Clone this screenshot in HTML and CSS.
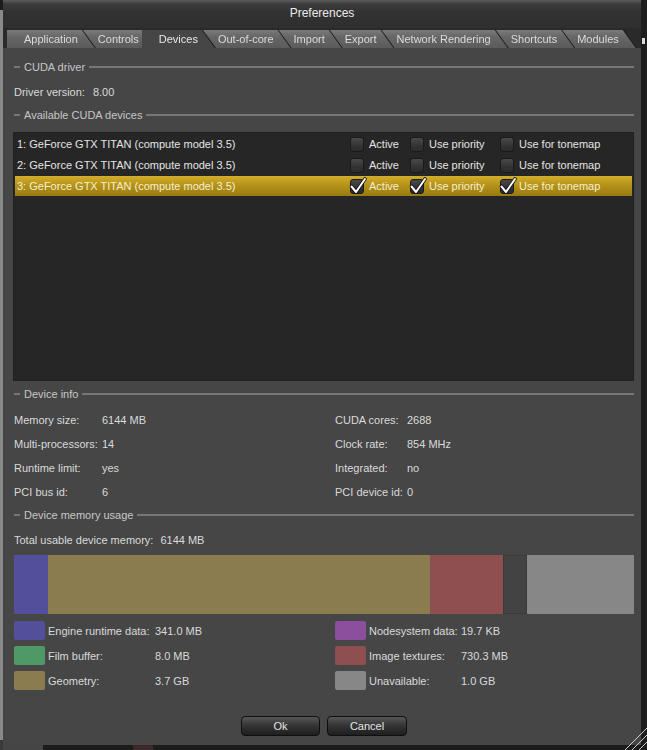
FILE: index.html
```html
<!DOCTYPE html>
<html>
<head>
<meta charset="utf-8">
<title>Preferences</title>
<link rel="stylesheet" href="styles.css">
</head>
<body>
<div class="screen">
  <div class="desk-left"></div>
  <div class="dialog">
    <div class="titlebar">Preferences</div>
    <div class="tabs">
      <div class="tab-wrap"><div class="tab">Application</div></div>
      <div class="tab-wrap"><div class="tab">Controls</div></div>
      <div class="tab-wrap active-wrap"><div class="tab active">Devices</div></div>
      <div class="tab-wrap"><div class="tab">Out-of-core</div></div>
      <div class="tab-wrap"><div class="tab">Import</div></div>
      <div class="tab-wrap"><div class="tab">Export</div></div>
      <div class="tab-wrap"><div class="tab">Network Rendering</div></div>
      <div class="tab-wrap"><div class="tab">Shortcuts</div></div>
      <div class="tab-wrap"><div class="tab">Modules</div></div>
    </div>
    <div class="content">
      <div class="section s1"><span class="sec-dash"></span><span class="sec-title">CUDA driver</span><span class="sec-line"></span></div>
      <div class="plain driver"><span>Driver version:</span><span class="driver-val">8.00</span></div>
      <div class="section s2"><span class="sec-dash"></span><span class="sec-title">Available CUDA devices</span><span class="sec-line"></span></div>
      <div class="devlist">
        <div class="devrow">
          <span class="devname">1: GeForce GTX TITAN (compute model 3.5)</span>
          <span class="opt"><span class="cb"></span>Active</span>
          <span class="opt"><span class="cb"></span>Use priority</span>
          <span class="opt"><span class="cb"></span>Use for tonemap</span>
        </div>
        <div class="devrow">
          <span class="devname">2: GeForce GTX TITAN (compute model 3.5)</span>
          <span class="opt"><span class="cb"></span>Active</span>
          <span class="opt"><span class="cb"></span>Use priority</span>
          <span class="opt"><span class="cb"></span>Use for tonemap</span>
        </div>
        <div class="devrow selected">
          <span class="devname">3: GeForce GTX TITAN (compute model 3.5)</span>
          <span class="opt"><span class="cb checked"><svg class="tick" viewBox="0 0 18 18"><path class="tick-o" d="M2.5 9.5 L7 15 L16 2"/><path class="tick-i" d="M2.5 9.5 L7 15 L16 2"/></svg></span>Active</span>
          <span class="opt"><span class="cb checked"><svg class="tick" viewBox="0 0 18 18"><path class="tick-o" d="M2.5 9.5 L7 15 L16 2"/><path class="tick-i" d="M2.5 9.5 L7 15 L16 2"/></svg></span>Use priority</span>
          <span class="opt"><span class="cb checked"><svg class="tick" viewBox="0 0 18 18"><path class="tick-o" d="M2.5 9.5 L7 15 L16 2"/><path class="tick-i" d="M2.5 9.5 L7 15 L16 2"/></svg></span>Use for tonemap</span>
        </div>
      </div>
      <div class="section s3"><span class="sec-dash"></span><span class="sec-title">Device info</span><span class="sec-line"></span></div>
      <div class="info">
        <span>Memory size:</span><span>6144 MB</span><span>CUDA cores:</span><span>2688</span>
        <span>Multi-processors:</span><span>14</span><span>Clock rate:</span><span>854 MHz</span>
        <span>Runtime limit:</span><span>yes</span><span>Integrated:</span><span>no</span>
        <span>PCI bus id:</span><span>6</span><span>PCI device id:</span><span>0</span>
      </div>
      <div class="section s4"><span class="sec-dash"></span><span class="sec-title">Device memory usage</span><span class="sec-line"></span></div>
      <div class="plain total"><span>Total usable device memory:</span><span class="total-val">6144 MB</span></div>
      <div class="bar">
        <span class="seg c-engine" style="width:34px"></span>
        <span class="seg c-geom" style="width:382px"></span>
        <span class="seg c-tex" style="width:73px"></span>
        <span class="seg c-free" style="width:24px"></span>
        <span class="seg c-unavail" style="flex:1"></span>
      </div>
      <div class="legend">
        <span class="sw c-engine"></span><span class="lg-label">Engine runtime data:</span><span>341.0 MB</span>
        <span class="sw c-node"></span><span class="lg-label">Nodesystem data:</span><span>19.7 KB</span>
        <span class="sw c-film"></span><span class="lg-label">Film buffer:</span><span>8.0 MB</span>
        <span class="sw c-tex"></span><span class="lg-label">Image textures:</span><span>730.3 MB</span>
        <span class="sw c-geom"></span><span class="lg-label">Geometry:</span><span>3.7 GB</span>
        <span class="sw c-unavail"></span><span class="lg-label">Unavailable:</span><span>1.0 GB</span>
      </div>
      <div class="buttons">
        <div class="btn ok">Ok</div>
        <div class="btn cancel">Cancel</div>
      </div>
    </div>
    <div class="desk-bottom"></div>
  </div>
  <div class="desk-right"><span class="desk-blip"></span></div>
  <svg class="grip" viewBox="0 0 22 22"><path d="M0 22 L22 0 M7 22 L22 7 M14 22 L22 14"/></svg>
</div>
</body>
</html>
```
FILE: styles.css
```css
* { box-sizing: border-box; }
html, body { margin: 0; padding: 0; }
body {
  width: 647px;
  height: 750px;
  overflow: hidden;
  background: #1e1e1e;
  font-family: "Liberation Sans", Arial, sans-serif;
  font-size: 11px;
  color: #dadada;
}
.screen { display: flex; height: 750px; position: relative; }
.desk-left { width: 3px; background: linear-gradient(#1c1c1c 0 10px, #8a8a8a 10px 740px, #3a3a3a 740px); }
.desk-right { flex: 1; background: #1d1d1d; position: relative; }
.desk-blip { position: absolute; left: 1px; top: 38px; width: 3px; height: 6px; background: #d8d8d8; }
.dialog { width: 638px; display: flex; flex-direction: column; background: #464646; }

.titlebar {
  height: 28px;
  line-height: 26px;
  text-align: center;
  font-size: 12px;
  color: #ececec;
  background: linear-gradient(#5c5c5c, #3c3c3c 4px, #323232 12px, #2f2f2f);
}

.tabs { height: 20px; background: #2a2a2a; display: flex; padding: 2px 0 0 4px; }
.tab-wrap { margin-right: -14px; filter: drop-shadow(1px 0 0 #151515); position: relative; }
.tab-wrap:nth-child(1) { z-index: 9; }
.tab-wrap:nth-child(2) { z-index: 8; }
.tab-wrap:nth-child(4) { z-index: 6; }
.tab-wrap:nth-child(5) { z-index: 5; }
.tab-wrap:nth-child(6) { z-index: 4; }
.tab-wrap:nth-child(7) { z-index: 3; }
.tab-wrap:nth-child(8) { z-index: 2; }
.tab-wrap:nth-child(9) { z-index: 1; }
.tab-wrap.active-wrap { z-index: 20; }
.tab {
  height: 18px;
  line-height: 18px;
  padding: 0 17px 0 17px;
  background: linear-gradient(#7a7a7a, #666 40%, #5b5b5b);
  color: #dcdcdc;
  white-space: nowrap;
  clip-path: polygon(0 0, calc(100% - 13px) 0, 100% 100%, 0 100%);
}
.tab.active { background: #464646; color: #e8e8e8; }

.content { flex: 1; display: flex; flex-direction: column; padding: 0 7px 0 11px; }

.section { display: flex; align-items: center; gap: 4px; height: 14px; color: #c6c6c6; }
.sec-dash { width: 6px; height: 2px; background: #777; }
.sec-line { flex: 1; height: 2px; background: #777; }
.s1 { margin-top: 12px; }
.s2 { margin-top: 9px; }
.s3 { margin-top: 6px; }
.s4 { margin-top: 4px; }

.plain { height: 14px; line-height: 14px; display: flex; }
.driver { margin-top: 11px; }
.driver-val { margin-left: 8px; }
.total { margin-top: 11px; }
.total-val { margin-left: 7px; }

.devlist {
  margin-top: 10px;
  margin-left: -1px;
  height: 249px;
  background: #262626;
  border: 1px solid #202020;
}
.devrow {
  height: 20px;
  margin: 1px;
  display: grid;
  grid-template-columns: 335px 60px 90px 1fr;
  align-items: center;
  color: #e4e4e4;
}
.devname { padding-left: 2px; }
.devrow.selected {
  background: linear-gradient(#d3ae2c, #b69319 45%, #977a10);
  color: #f6efcf;
}
.opt { display: flex; align-items: center; gap: 5px; }
.cb {
  position: relative;
  width: 14px;
  height: 15px;
  border-radius: 3px;
  border: 1px solid #1a1a1a;
  background: linear-gradient(#4a4a4a, #333 60%, #2c2c2c);
}
.tick { position: absolute; left: -2px; top: -3px; width: 18px; height: 18px; overflow: visible; }
.tick path { fill: none; stroke-linecap: round; stroke-linejoin: round; }
.tick-o { stroke: #111; stroke-width: 3.6; }
.tick-i { stroke: #ffffff; stroke-width: 2; }

.info {
  margin-top: 7px;
  display: grid;
  grid-template-columns: 88px 233px 72px 1fr;
  grid-auto-rows: 24px;
  align-items: center;
}

.bar { margin-top: 8px; height: 59px; display: flex; }
.seg { height: 100%; }
.c-engine { background: #52509a; }
.c-geom { background: #8b7c4f; }
.c-tex { background: #8e4f50; }
.c-free { background: #434343; border: 1px solid #3a3a3a; }
.c-unavail { background: #878787; }
.c-node { background: #8c4f9d; }
.c-film { background: #4f9966; }

.legend {
  margin-top: 7px;
  display: grid;
  grid-template-columns: 31px 110px 180px 31px 95px 1fr;
  grid-auto-rows: 19px;
  row-gap: 6px;
  align-items: center;
}
.sw { height: 19px; border-radius: 2px; }
.lg-label { padding-left: 3px; }

.buttons { margin-top: 26px; display: flex; justify-content: center; gap: 7px; }
.btn {
  height: 20px;
  border: 1px solid #0f0f0f;
  border-radius: 4px;
  background: linear-gradient(#575757, #363636 45%, #1e1e1e);
  color: #e6e6e6;
  display: flex;
  align-items: center;
  justify-content: center;
}
.ok { width: 79px; }
.cancel { width: 80px; }

.desk-bottom { margin-top: auto; height: 5px; background: linear-gradient(to right, #454545 0 40px, #1c1c1c 40px 130px, #3c2a2a 130px 150px, #1c1c1c 150px); }

.grip { position: absolute; right: 0; bottom: 0; width: 22px; height: 22px; }
.grip path { stroke: #cfcfcf; stroke-width: 1; fill: none; }
```
